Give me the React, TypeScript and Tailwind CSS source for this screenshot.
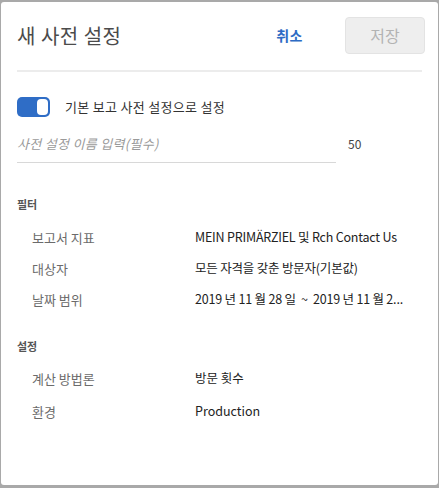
export default function App() {
  const font = { fontFamily: '"Noto Sans CJK KR", "Noto Sans", sans-serif' }
  const filters = [
    { label: "보고서 지표", value: "MEIN PRIMÄRZIEL 및 Rch Contact Us" },
    { label: "대상자", value: "모든 자격을 갖춘 방문자(기본값)" },
    { label: "날짜 범위", value: "2019 년 11 월 28 일  ~  2019 년 11 월 2..." },
  ]
  const settings = [
    { label: "계산 방법론", value: "방문 횟수" },
    { label: "환경", value: "Production" },
  ]

  return (
    <div className="w-[439px] h-[488px] bg-[#a9a9a9] pt-[2px] pl-[1px] pr-[1px] pb-[3px]" style={font}>
      <div className="h-full bg-white rounded-[3px] flex flex-col px-4">
        {/* 헤더 */}
        <div className="flex items-center h-[70px] border-b-2 border-[#ececec]">
          <h1 className="text-[20px] text-[#4b4b4b] font-normal tracking-[0.5px] flex-1">새 사전 설정</h1>
          <button className="text-[14px] font-bold text-[#2d6bc4] mr-[42px] mb-[2px] tracking-[0.5px]">취소</button>
          <button className="w-[80px] h-[37px] rounded-[4px] bg-[#eeeeee] border border-[#e3e3e3] text-[16px] text-[#b3b3b3] -mr-[3px] mb-[2px]">
            저장
          </button>
        </div>

        {/* 기본 설정 토글 */}
        <div className="flex items-center mt-[24px] h-[22px]">
          <div className="w-[33px] h-[20px] rounded-[5px] bg-[#2f6dc6] flex items-center justify-end p-[2px]">
            <div className="w-[11px] h-[16px] rounded-[4px] bg-white" />
          </div>
          <span className="ml-[15px] text-[13px] text-[#333] tracking-[0.3px]">기본 보고 사전 설정으로 설정</span>
        </div>

        {/* 이름 입력 */}
        <div className="flex items-center mt-[13px] h-[32px]">
          <div className="w-[319px] h-[32px] border-b border-[#d8d8d8] flex items-center pb-[6px]">
            <span className="text-[13px] italic text-[#9a9a9a] tracking-[0.3px]">사전 설정 이름 입력(필수)</span>
          </div>
          <span className="ml-[12px] text-[12px] text-[#444] mb-[6px]">50</span>
        </div>

        {/* 필터 */}
        <div className="mt-[33px] h-[16px] leading-[16px] text-[11px] font-bold text-[#555]">필터</div>
        <div className="mt-[10px] flex flex-col">
          {filters.map((f) => (
            <div key={f.label} className="flex items-center h-[31px] pl-[15px]">
              <span className="w-[163px] shrink-0 text-[13px] text-[#6b6b6b]">{f.label}</span>
              <span className="whitespace-pre text-[12.5px] text-[#222] tracking-[-0.2px]">{f.value}</span>
            </div>
          ))}
        </div>

        {/* 설정 */}
        <div className="mt-[23px] h-[16px] leading-[16px] text-[11px] font-bold text-[#555]">설정</div>
        <div className="mt-[8px] flex flex-col">
          {settings.map((f) => (
            <div key={f.label} className="flex items-center h-[33px] pl-[15px]">
              <span className="w-[163px] shrink-0 text-[13px] text-[#6b6b6b]">{f.label}</span>
              <span className="text-[12.5px] text-[#222]">{f.value}</span>
            </div>
          ))}
        </div>
      </div>
    </div>
  )
}
